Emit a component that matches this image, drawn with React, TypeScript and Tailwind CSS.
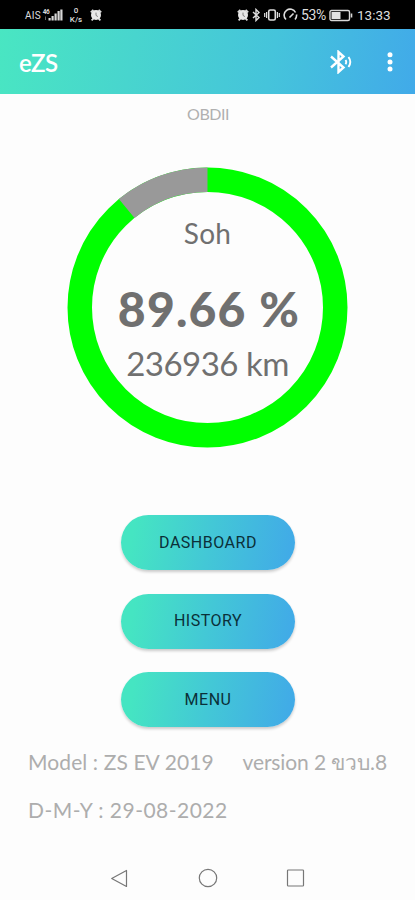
import React from "react";

function AlarmIcon() {
  return (
    <svg className="h-3 w-3 shrink-0" viewBox="0 0 12 12" fill="none">
      <path d="M.8 3.400 3.400.8M11.200 3.400 8.600.8M1.600 11.300l2-2M10.400 11.300l-2-2" stroke="#ddd" strokeWidth="1.8" />
      <circle cx="6" cy="6" r="5" fill="#e8e8e8" />
      <path d="M6 3.6v2.8l1.9 1.2" stroke="#777" strokeWidth="0.9" />
    </svg>
  );
}

function StatusBar() {
  return (
    <div className="flex h-[28.5px] shrink-0 items-center justify-between bg-black pr-[24px] pl-[25px] pt-[2px] font-['Roboto',sans-serif] text-[#dedede]">
      <div className="flex items-center">
        <span className="w-[17px] text-[10px] tracking-[0.2px]">AIS</span>
        <svg className="h-[14px] w-[21px]" viewBox="0 0 20 14" fill="#d8d8d8">
          <text x="0.3" y="6" fontSize="6.5" fontWeight="700" textLength="7">46</text>
          <path d="M6 10h2.200v2.5H6zM9 8h2.200v4.5H9zM12 5.5h2.200v7H12zM15 3h2.200v9.5H15zM17.800 1.5H20v11h-2.200z" />
          <path d="M2.5 8.5h1v3.500h-1z" fill="#666" />
        </svg>
        <div className="ml-[6px] flex w-[14px] flex-col items-center text-[8px] leading-[9px] font-medium">
          <span>0</span>
          <span>K/s</span>
        </div>
        <div className="ml-[7px] flex">
          <AlarmIcon />
        </div>
      </div>
      <div className="flex items-center">
        <AlarmIcon />
        <svg className="ml-[3px] h-[14px] w-[9px]" viewBox="0 0 9 14" fill="none" stroke="#ddd" strokeWidth="1.4">
          <path d="m1 4 6 5.500-3 3V1.500l3 3L1 10" />
        </svg>
        <svg className="ml-[3px] h-[14px] w-[16px]" viewBox="0 0 16 14" fill="none" stroke="#ddd" strokeWidth="1.6">
          <rect x="4.700" y="2" width="6.600" height="10" rx="1.500" />
          <path d="M2.600 4v6M.7 5v4M13.400 4v6M15.300 5v4" strokeWidth="1.200" />
        </svg>
        <svg className="ml-[3px] h-[14px] w-[15px]" viewBox="0 0 15 14" fill="none" stroke="#ddd" strokeWidth="1.600">
          <path d="M3 11.500A6 6 0 1 1 12.500 4.500M13.500 6.500A6 6 0 0 1 12 11.500M6.500 9.500l4-4" />
        </svg>
        <span className="ml-[3px] w-[26px] text-[14px] leading-[14px] tracking-[-0.400px]">53%</span>
        <svg className="ml-[2px] h-[13px] w-[24px]" viewBox="0 0 24 13" fill="none" stroke="#d8d8d8">
          <rect x="1" y="1.500" width="19.500" height="10" rx="1.500" strokeWidth="1.400" />
          <path d="M2.500 3h9v7h-9z" fill="#e3e3e3" stroke="none" />
          <path d="M22.500 4.500v4" strokeWidth="1.600" />
        </svg>
        <span className="ml-[4px] w-[34px] text-[13.500px] leading-[14px]">13:33</span>
      </div>
    </div>
  );
}

function AppBar() {
  return (
    <header className="flex h-[65.500px] shrink-0 items-center justify-between bg-[linear-gradient(100deg,#49e6c2_0%,#48d5ce_32%,#45c4db_65%,#41aae9_100%)] pr-[22px] pl-[19px] text-white">
      <h1 className="pt-[3px] font-['Lato',sans-serif] text-[24px] leading-[30px] font-semibold tracking-[-0.500px]">eZS</h1>
      <div className="flex items-center pt-[1px]">
        <svg className="h-[24px] w-[24px]" viewBox="0 0 24 24" fill="none" stroke="white" strokeWidth="2.400">
          <path d="m2 6.500 12.500 11L9.500 22V2l5 4.500L2 17.500" />
          <path d="M16.500 10q1.500 2 0 4.200M19.500 7q3.600 5 0 10" strokeWidth="1.900" />
        </svg>
        <svg className="ml-[34px] h-[24px] w-[6px]" viewBox="0 0 6 24" fill="white">
          <circle cx="3" cy="4.800" r="2.500" />
          <circle cx="3" cy="12" r="2.500" />
          <circle cx="3" cy="19" r="2.500" />
        </svg>
      </div>
    </header>
  );
}

function HealthGauge() {
  return (
    <section className="mt-[43px] grid h-[281px] w-[281px] place-items-center self-center font-['Lato',sans-serif] text-[#707070]">
      <svg className="col-start-1 row-start-1 h-[281px] w-[281px]" viewBox="0 0 281 281" fill="none">
        <circle cx="140.500" cy="140.500" r="127.750" stroke="#00ff00" strokeWidth="24.500" />
        <circle cx="140.500" cy="140.500" r="127.750" stroke="#999" strokeWidth="24.700" pathLength="100" strokeDasharray="10.900 89.100" transform="rotate(-129.240 140.500 140.500)" />
      </svg>
      <div className="col-start-1 row-start-1 flex h-full flex-col items-center whitespace-nowrap">
        <p className="mt-[48px] text-[28px] leading-[36px] tracking-[0.300px]">Soh</p>
        <p className="mt-[28px] pl-[3px] text-[48px] leading-[60px] font-black tracking-[1.200px] text-[#707070]">89.66 %</p>
        <p className="mt-[4px] text-[33px] leading-[40px] tracking-[-0.500px]">236936 km</p>
      </div>
    </section>
  );
}

function MenuButton({ label }: { label: string }) {
  return (
    <button className="h-[55px] w-[174px] rounded-full bg-[linear-gradient(100deg,#45e5c2_8%,#43c8d6_50%,#41abe7_96%)] pl-[1px] font-['Roboto',sans-serif] text-[16px] tracking-[0.500px] text-[#0b3038] shadow-[0_2px_3px_rgba(0,0,0,0.200)]">
      {label}
    </button>
  );
}

export default function App() {
  return (
    <main className="flex h-[900px] w-[415px] flex-col overflow-hidden bg-[#fdfdfd]">
      <StatusBar />
      <AppBar />
      <p className="mt-[10px] h-[20px] self-center pl-[1px] font-['Lato',sans-serif] text-[16px] leading-[20px] tracking-[-0.500px] text-[#b0b0b0]">OBDII</p>
      <HealthGauge />
      <nav className="mt-[67px] flex flex-col items-center gap-[23.500px]">
        <MenuButton label="DASHBOARD" />
        <MenuButton label="HISTORY" />
        <MenuButton label="MENU" />
      </nav>
      <section className="mt-[20px] px-[28px] font-['Lato',sans-serif] text-[21px] leading-[30px] text-[#adadad]">
        <div className="flex justify-between whitespace-nowrap">
          <span className="tracking-[0.100px]">Model : ZS EV 2019</span>
          <span className="tracking-[-0.100px]">version 2 ขวบ.8</span>
        </div>
        <p className="mt-[18px] tracking-[0.480px]">D-M-Y : 29-08-2022</p>
      </section>
      <footer className="mt-auto flex h-[45px] items-center justify-center gap-[68px]">
        <svg className="h-[20px] w-[20px]" viewBox="0 0 20 20" fill="none" stroke="#777" strokeWidth="1.200">
          <path d="M1.700 10.500 16.500 2.500v16z" strokeLinejoin="round" />
        </svg>
        <svg className="h-[20px] w-[20px]" viewBox="0 0 20 20" fill="none" stroke="#777" strokeWidth="1.200">
          <circle cx="10" cy="10" r="8.700" />
        </svg>
        <svg className="h-[20px] w-[20px]" viewBox="0 0 20 20" fill="none" stroke="#777" strokeWidth="1.200">
          <rect x="1.500" y="2" width="16" height="16" rx="0.800" />
        </svg>
      </footer>
    </main>
  );
}
